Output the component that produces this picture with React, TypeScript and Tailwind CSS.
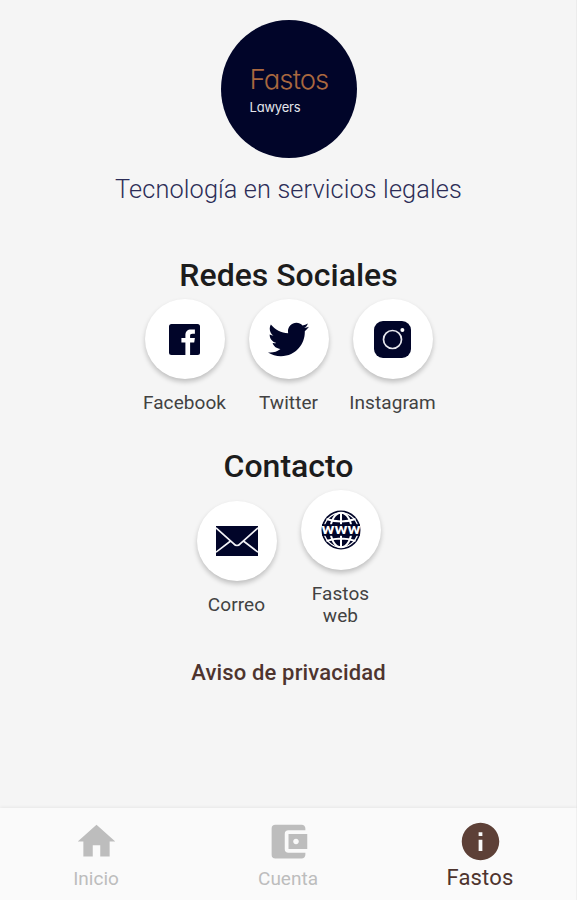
import type { ReactNode } from "react";
import { FaTwitter } from "react-icons/fa";
import { MdAccountBalanceWallet, MdHome, MdInfo } from "react-icons/md";

const NAVY = "#010529";

function FacebookIcon() {
  return (
    <svg width="31" height="31" viewBox="0 0 31 31">
      <rect width="31" height="31" rx="2.5" fill={NAVY} />
      <path
        d="M16.4 31V18.6h-4V14h4v-2.8c0-3.7 2.2-5.7 5.5-5.7h4v4.3h-2.4c-2 0-2.4.8-2.4 2.1V14h4.8l-.7 4.6h-4.1V31z"
        fill="#fff"
      />
    </svg>
  );
}

function InstagramIcon() {
  return (
    <svg width="37" height="37" viewBox="0 0 37 37">
      <rect width="37" height="37" rx="9" fill={NAVY} />
      <circle cx="18.5" cy="18.5" r="9" fill="none" stroke="#e8e8ee" strokeWidth="1.7" />
      <circle cx="28.4" cy="9" r="2" fill="#fff" />
    </svg>
  );
}

function MailIcon() {
  return (
    <svg width="42" height="30" viewBox="0 0 42 30">
      <rect width="42" height="30" fill={NAVY} />
      <path
        d="M0 1.8 17.6 17.6Q21 21.4 24.4 17.6L42 1.8M0 26.2 14.6 15M42 26.2 27.4 15"
        fill="none"
        stroke="#f4f4f8"
        strokeWidth="1.7"
      />
    </svg>
  );
}

function WebIcon() {
  return (
    <svg width="40" height="40" viewBox="0 0 40 40">
      <circle cx="20" cy="20" r="19.5" fill={NAVY} />
      <g fill="none" stroke="#fff" strokeWidth="2">
        <circle cx="20" cy="20" r="17.2" strokeWidth="1.3" />
        <ellipse cx="20" cy="20" rx="10.5" ry="17.2" />
        <path d="M20 2.5v35M5.5 9q14.5 5 29 0M5.5 31q14.5-5 29 0" />
      </g>
      <rect x="1" y="14.2" width="38" height="11.6" fill={NAVY} />
      <text
        x="20"
        y="24.2"
        textAnchor="middle"
        textLength="39"
        lengthAdjust="spacingAndGlyphs"
        fill="#fff"
        fontFamily="Roboto, sans-serif"
        fontWeight="700"
        fontSize="15.5"
      >
        www
      </text>
    </svg>
  );
}

function Action({ icon, label, width }: { icon: ReactNode; label: string; width: string }) {
  return (
    <button className="flex w-[104px] flex-col items-center">
      <span className="flex size-20 items-center justify-center rounded-full bg-white shadow-[0_3px_5px_rgba(0,0,0,0.22)]">
        {icon}
      </span>
      <span
        className={`mt-[13px] text-center text-[19px] leading-[22.5px] tracking-[0.08px] text-[#424242] ${width}`}
      >
        {label}
      </span>
    </button>
  );
}

function Tab({ icon, label, active }: { icon: ReactNode; label: string; active?: boolean }) {
  return (
    <button
      className={`flex flex-1 flex-col items-center pt-[11px] ${active ? "text-[#5d4037]" : "text-[#bdbdbd]"}`}
    >
      {icon}
      <span
        className={
          active
            ? "mt-0.5 text-[22px] leading-6 tracking-[0.15px] text-[#4e342e]"
            : "mt-[3px] text-[19px] leading-6"
        }
      >
        {label}
      </span>
    </button>
  );
}

export default function App() {
  return (
    <div className="flex h-[900px] w-[577px] flex-col overflow-hidden bg-[#f5f5f5] font-[Roboto,sans-serif]">
      <main className="flex flex-1 flex-col items-center border-r border-[#ececec] pt-5 pl-px">
        <div className="flex h-[138px] w-[136px] flex-col rounded-[50%] bg-[#010529] pt-[41px] pl-[29px] font-[Inter,sans-serif] [font-feature-settings:'cv11']">
          <span className="text-[27.5px] leading-9 font-light tracking-[-0.9px] text-[#a9683f]">Fastos</span>
          <span className="mt-px text-[13px] leading-[18px] tracking-[-0.2px] text-[#e4e5ec]">Lawyers</span>
        </div>
        <p className="mt-[17px] text-[25.3px] leading-[30px] font-light tracking-[0.13px] text-[#2c2d57]">
          Tecnología en servicios legales
        </p>

        <h2 className="mt-[52px] text-[32px] leading-9 font-medium text-[#1c1c1c]">Redes Sociales</h2>
        <div className="mt-[6px] flex">
          <Action icon={<FacebookIcon />} label="Facebook" width="w-auto" />
          <Action icon={<FaTwitter size={41} color={NAVY} />} label="Twitter" width="w-auto" />
          <Action icon={<InstagramIcon />} label="Instagram" width="w-auto" />
        </div>

        <h2 className="mt-[33px] text-[32px] leading-9 font-medium text-[#1c1c1c]">Contacto</h2>
        <div className="mt-[6px] flex items-center">
          <Action icon={<MailIcon />} label="Correo" width="w-auto" />
          <Action icon={<WebIcon />} label="Fastos web" width="w-[70px]" />
        </div>

        <button className="mt-[31px] text-[22px] leading-7 font-medium tracking-[0.16px] text-[#4e342e]">
          Aviso de privacidad
        </button>
      </main>

      <nav className="flex h-[92px] border-r border-[#f0f0f0] bg-[#fafafa] shadow-[0_-1px_3px_rgba(0,0,0,0.06)]">
        <Tab icon={<MdHome size={45} />} label="Inicio" />
        <Tab icon={<MdAccountBalanceWallet size={45} />} label="Cuenta" />
        <Tab icon={<MdInfo size={45} />} label="Fastos" active />
      </nav>
    </div>
  );
}
